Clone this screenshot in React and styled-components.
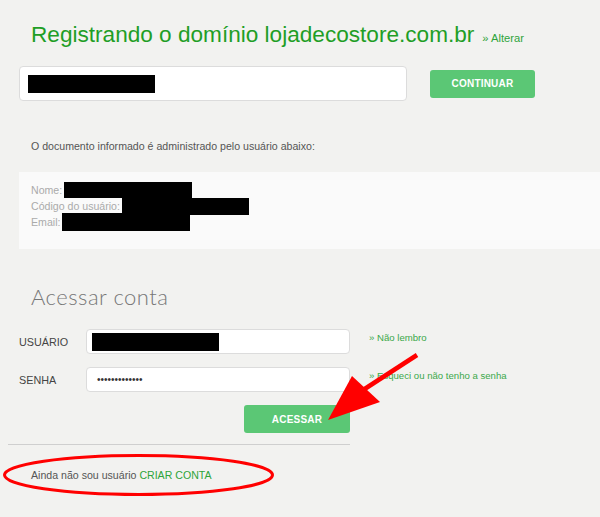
import React from "react";
import styled, { createGlobalStyle } from "styled-components";

const GlobalStyle = createGlobalStyle`
  html, body {
    margin: 0;
    padding: 0;
    background: #f2f2f0;
    font-family: "Liberation Sans", Arial, sans-serif;
  }
`;

const Page = styled.div`
  position: relative;
  width: 600px;
  height: 517px;
  overflow: hidden;
  padding-top: 21px;
  box-sizing: border-box;
`;

const TitleRow = styled.div`
  display: flex;
  align-items: baseline;
  height: 28px;
  padding-left: 31px;
  line-height: 28px;
`;

const Title = styled.h1`
  margin: 0;
  font-size: 22.6px;
  font-weight: 400;
  color: #1f9e26;
`;

const SmallLink = styled.a`
  margin-left: 8px;
  font-size: 11.2px;
  color: #2ea43a;
  text-decoration: none;
`;

const DomainRow = styled.div`
  display: flex;
  align-items: center;
  gap: 23px;
  height: 35px;
  margin: 17px 0 0 19px;
`;

const Field = styled.div`
  box-sizing: border-box;
  width: ${(p) => p.$w}px;
  height: ${(p) => p.$h}px;
  background: #fff;
  border: 1px solid #dcdcdc;
  border-radius: 4px;
  display: flex;
  align-items: center;
  padding-left: ${(p) => p.$pad}px;
`;

const Redact = styled.span`
  display: inline-block;
  background: #000;
  width: ${(p) => p.$w}px;
  height: ${(p) => p.$h}px;
  vertical-align: middle;
`;

const Button = styled.button`
  width: ${(p) => p.$w}px;
  height: 28px;
  border: none;
  border-radius: 3px;
  background: #5bc775;
  color: #fff;
  font-family: "Liberation Sans", Arial, sans-serif;
  font-weight: 700;
  font-size: 10px;
  letter-spacing: 0.2px;
  padding: 0;
`;

const Notice = styled.p`
  margin: 38px 0 0 31px;
  font-size: 10.6px;
  color: #555;
  line-height: 14px;
`;

const InfoBox = styled.div`
  margin: 19px 0 0 19px;
  height: 77px;
  box-sizing: border-box;
  background: #fafafa;
  padding: 10px 12px;
  font-size: 10.6px;
  line-height: 16px;
  color: #aaa;
`;

const InfoLine = styled.div`
  height: 16px;
  display: flex;
  align-items: center;
  gap: 2px;
`;

const SectionTitle = styled.h2`
  margin: 35px 0 0 31px;
  font-family: Lato, "Open Sans", sans-serif;
  font-weight: 300;
  font-size: 22px;
  letter-spacing: 0.5px;
  line-height: 26px;
  color: #777;
`;

const Form = styled.div`
  margin: 19px 0 0 19px;
  display: flex;
  flex-direction: column;
  gap: 13px;
  width: 331px;
`;

const FormRow = styled.div`
  display: flex;
  align-items: center;
  position: relative;
`;

const Label = styled.span`
  width: 67px;
  font-size: 10.8px;
  color: #444;
`;

const SideLink = styled.a`
  position: absolute;
  left: 350px;
  top: 3px;
  white-space: nowrap;
  font-size: 9.6px;
  color: #3aa84a;
  text-decoration: none;
`;

const Dots = styled.span`
  font-size: 10px;
  color: #333;
`;

const Actions = styled.div`
  display: flex;
  justify-content: flex-end;
`;

const Rule = styled.hr`
  margin: 11px 0 0 8px;
  width: 342px;
  border: none;
  border-top: 1px solid #cfcfcf;
`;

const Footer = styled.p`
  margin: 23px 0 0 31px;
  font-size: 10.6px;
  line-height: 14px;
  color: #555;
`;

const FooterLink = styled.a`
  color: #2ea43a;
  text-decoration: none;
`;

const Overlay = styled.svg`
  position: absolute;
  left: 0;
  top: 0;
  pointer-events: none;
`;

export default function App() {
  return (
    <>
      <GlobalStyle />
      <Page>
        <TitleRow>
          <Title>Registrando o domínio lojadecostore.com.br</Title>
          <SmallLink href="#">» Alterar</SmallLink>
        </TitleRow>
        <DomainRow>
          <Field $w={388} $h={35} $pad={8}>
            <Redact $w={127} $h={18} />
          </Field>
          <Button $w={105}>CONTINUAR</Button>
        </DomainRow>

        <Notice>O documento informado é administrado pelo usuário abaixo:</Notice>
        <InfoBox>
          <InfoLine>
            Nome:<Redact $w={128} $h={16} />
          </InfoLine>
          <InfoLine>
            Código do usuário:<Redact $w={127} $h={17} />
          </InfoLine>
          <InfoLine>
            Email:<Redact $w={128} $h={18} />
          </InfoLine>
        </InfoBox>

        <SectionTitle>Acessar conta</SectionTitle>
        <Form>
          <FormRow>
            <Label>USUÁRIO</Label>
            <Field $w={264} $h={25} $pad={5}>
              <Redact $w={127} $h={18} />
            </Field>
            <SideLink>» Não lembro</SideLink>
          </FormRow>
          <FormRow>
            <Label>SENHA</Label>
            <Field $w={264} $h={25} $pad={10}>
              <Dots>•••••••••••••</Dots>
            </Field>
            <SideLink>» Esqueci ou não tenho a senha</SideLink>
          </FormRow>
          <Actions>
            <Button $w={106}>ACESSAR</Button>
          </Actions>
        </Form>
        <Rule />
        <Footer>
          Ainda não sou usuário <FooterLink href="#">CRIAR CONTA</FooterLink>
        </Footer>

        <Overlay width="600" height="517">
          <ellipse cx="138.5" cy="475" rx="134" ry="19.5" fill="none" stroke="#f00" strokeWidth="3" />
          <line x1="417" y1="355" x2="360" y2="392" stroke="#f00" strokeWidth="4.5" />
          <polygon points="328,420 352,376 380,402" fill="#f00" />
        </Overlay>
      </Page>
    </>
  );
}
